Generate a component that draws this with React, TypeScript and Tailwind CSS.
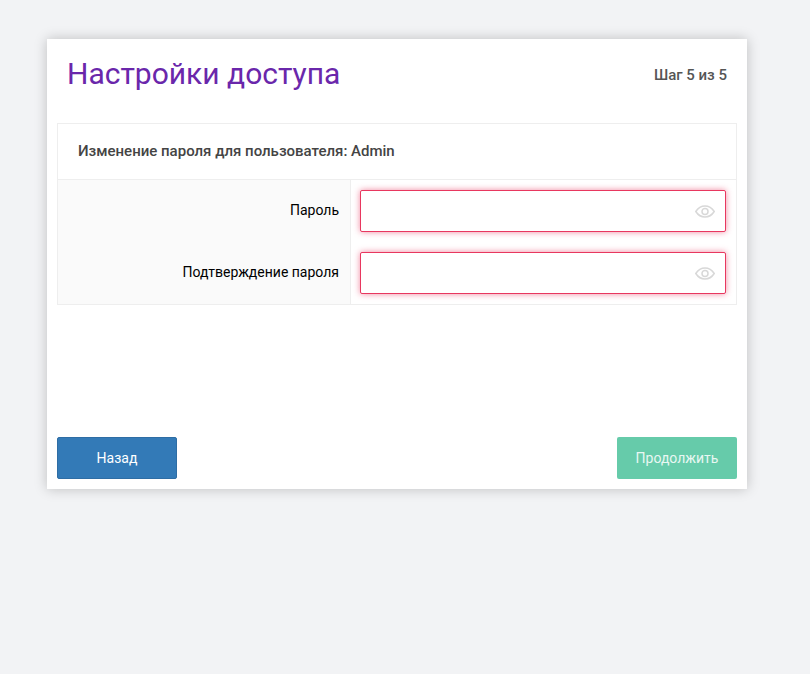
const EyeIcon = () => (
    <svg width="20" height="13" viewBox="0 0 20 13" fill="none" stroke="#d8d8d8" strokeWidth="1.5" className="absolute right-[10px] top-[14px]">
        <path d="M.8 6.500C3 3 6.300 1 10 1s7 2 9.200 5.500C17 10 13.700 12 10 12S3 10 .8 6.500z" />
        <circle cx="10" cy="6.500" r="3" />
    </svg>
);

const fields = ['Пароль', 'Подтверждение пароля'];

export default function App() {
    return (
        <div className="min-h-[674px] bg-[#f2f3f5] pt-[39px] pl-[47px] font-['Roboto',sans-serif]">
            <div className="flex h-[450px] w-[700px] flex-col bg-white px-[10px] shadow-[0_0_12px_rgba(0,0,0,0.22)]">
                <div className="flex h-[84px] justify-between px-[10px] pt-[17px]">
                    <h1 className="text-[30px] leading-[36px] font-normal text-[#6a27ab]">Настройки доступа</h1>
                    <span className="pt-[8px] text-[15px] font-medium text-[#555555]">Шаг 5 из 5</span>
                </div>

                <div className="border border-[#eeeeee]">
                    <div className="flex h-[56px] items-center border-b border-[#eeeeee] px-[20px] text-[15px] font-medium text-[#444444]">
                        Изменение пароля для пользователя: Admin
                    </div>
                    <div className="bg-[#fafafa]">
                        {fields.map(label => (
                            <div key={label} className="flex h-[62px]">
                                <label className="flex w-[292px] items-center justify-end pr-[11px] pb-[2px] text-[14px] text-black">
                                    {label}
                                </label>
                                <div className="flex-1 border-l border-[#eeeeee] bg-white pt-[10px] pr-[10px] pl-[9px]">
                                    <div className="relative h-[42px] rounded-[2px] border border-[#e8375f] bg-white shadow-[0_0_6px_rgba(232,55,95,0.6)]">
                                        <input type="password" className="h-full w-full bg-transparent px-3 outline-none" />
                                        <EyeIcon />
                                    </div>
                                </div>
                            </div>
                        ))}
                    </div>
                </div>

                <div className="mt-auto mb-[10px] flex justify-between">
                    <button className="h-[42px] w-[120px] rounded-[2px] border border-[#2e6da4] bg-[#337ab7] text-[14px] text-white">
                        Назад
                    </button>
                    <button className="h-[42px] w-[120px] rounded-[2px] bg-[#66cbaa] text-[14px] text-[#e8f7f2]">
                        Продолжить
                    </button>
                </div>
            </div>
        </div>
    );
}
